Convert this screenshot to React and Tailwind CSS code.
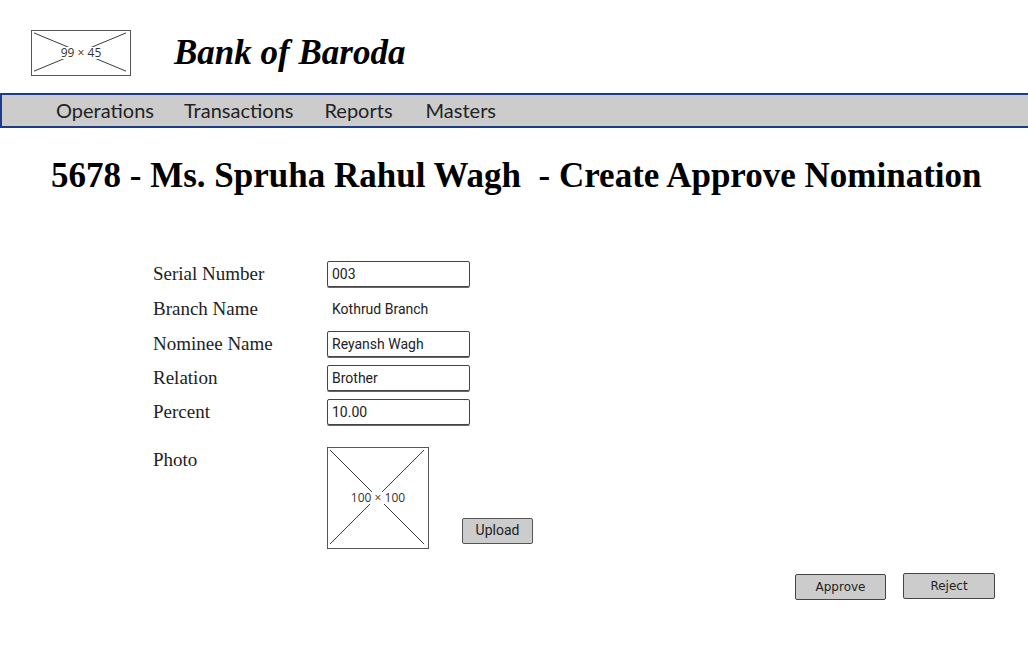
import React from 'react';

const serif = { fontFamily: '"Liberation Serif", "Times New Roman", serif' };

const Placeholder = ({ w, h, label, textClass }) => (
    <div className="relative border border-[#555] bg-white shrink-0" style={{ width: w, height: h }}>
        <svg className="absolute inset-0" width="100%" height="100%" viewBox={`0 0 ${w} ${h}`} preserveAspectRatio="none">
            <line x1="2" y1="2" x2={w - 4} y2={h - 4} stroke="#333" strokeWidth="1" />
            <line x1={w - 4} y1="2" x2="2" y2={h - 4} stroke="#333" strokeWidth="1" />
        </svg>
        <div className="absolute inset-0 flex items-center justify-center">
            <span className={`bg-white px-[1px] leading-none text-[#333] font-['Open_Sans',sans-serif] ${textClass}`}>{label}</span>
        </div>
    </div>
);

const Field = ({ value }) => (
    <div className="w-[143px] h-[26px] border border-[#444] rounded-[2px] px-1 flex items-center text-[14px] text-[#222] font-['Roboto',sans-serif] shadow-[0_1px_0_#666]">
        {value}
    </div>
);

const Row = ({ label, children, className = '' }) => (
    <div className={`flex items-center h-[26px] ${className}`}>
        <div className="w-[174px] text-[19px] leading-none text-[#222] -mt-[1px]" style={serif}>{label}</div>
        {children}
    </div>
);

export default function App() {
    return (
        <div className="w-[1028px] h-[650px] bg-white overflow-hidden relative">
            {/* Header */}
            <div className="flex items-center pt-[30px] pl-[31px] h-[93px] pb-[17px]">
                <Placeholder w={100} h={46} label="99 × 45" textClass="text-[12px]" />
                <h1 className="ml-[43px] text-[35px] font-bold italic text-black leading-none -mt-[2px]" style={serif}>
                    Bank of Baroda
                </h1>
            </div>

            {/* Nav */}
            <div className="h-[35px] bg-[#cccccc] border-y-2 border-l-2 border-[#1e3a8a] flex items-center pl-[54px] gap-[30px] text-[20px] text-[#222] font-['Lato',sans-serif]">
                <span className="-mt-[1px]">Operations</span>
                <span className="-mt-[1px]">Transactions</span>
                <span className="-mt-[1px] ml-[1px]">Reports</span>
                <span className="-mt-[1px] ml-[3px]">Masters</span>
            </div>

            {/* Title */}
            <h2 className="mt-[30px] ml-[51px] text-[35px] font-bold text-black leading-none whitespace-pre" style={serif}>
                5678 - Ms. Spruha Rahul Wagh  - Create Approve Nomination
            </h2>

            {/* Form */}
            <div className="ml-[153px] mt-[68px] flex flex-col">
                <Row label="Serial Number">
                    <Field value="003" />
                </Row>
                <Row label="Branch Name" className="mt-[9px]">
                    <div className="h-[26px] flex items-center pl-[5px] text-[14px] text-[#222] font-['Roboto',sans-serif]">Kothrud Branch</div>
                </Row>
                <Row label="Nominee Name" className="mt-[9px]">
                    <Field value="Reyansh Wagh" />
                </Row>
                <Row label="Relation" className="mt-[8px]">
                    <Field value="Brother" />
                </Row>
                <Row label="Percent" className="mt-[8px]">
                    <Field value="10.00" />
                </Row>
                <div className="flex mt-[22px]">
                    <div className="w-[174px] text-[19px] text-[#222] leading-none pt-[3px]" style={serif}>Photo</div>
                    <Placeholder w={102} h={102} label="100 × 100" textClass="text-[12px]" />
                    <div className="ml-[33px] mt-[70px]">
                        <button className="w-[71px] h-[26px] bg-[#cccccc] border border-[#555] rounded-[2px] text-[14px] text-[#222] font-['Roboto',sans-serif]">
                            Upload
                        </button>
                    </div>
                </div>
            </div>

            {/* Actions */}
            <div className="flex justify-end items-start gap-[17px] pr-[33px] mt-[24px]">
                <button className="mt-[1px] w-[91px] h-[26px] bg-[#cccccc] border border-[#444] rounded-[2px] text-[12px] text-[#222] font-['DejaVu_Sans',sans-serif]">
                    Approve
                </button>
                <button className="w-[92px] h-[26px] bg-[#cccccc] border border-[#444] rounded-[2px] text-[12px] text-[#222] font-['DejaVu_Sans',sans-serif]">
                    Reject
                </button>
            </div>
        </div>
    );
}
